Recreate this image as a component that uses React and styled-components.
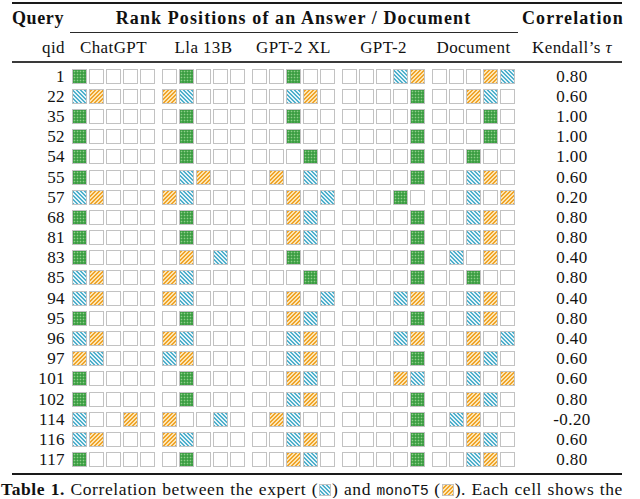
import React from 'react'
import styled, { createGlobalStyle, css } from 'styled-components'

const serif = `"Liberation Serif", "Times New Roman", "DejaVu Serif", serif`

const GlobalStyle = createGlobalStyle`
  html, body {
    margin: 0;
    padding: 0;
    background: #ffffff;
  }
  body {
    font-family: ${serif};
    color: #111111;
  }
`;

const groups = ['ChatGPT', 'Lla 13B', 'GPT-2 XL', 'GPT-2', 'Document']

// G = both agree, B = expert, O = monoT5, . = empty
const rows = [
  ['1', 'G....', '.G...', '..G..', '...BO', '...OB', '0.80'],
  ['22', 'BO...', 'OB...', '..BO.', '....G', '..OB.', '0.60'],
  ['35', 'G....', '.G...', '..G..', '....G', '...G.', '1.00'],
  ['52', 'G....', '.G...', '..G..', '....G', '...G.', '1.00'],
  ['54', 'G....', '.G...', '...G.', '....G', '..G..', '1.00'],
  ['55', 'G....', '.BO..', '.O.B.', '....G', '..BO.', '0.60'],
  ['57', 'BO...', 'OB...', '..O.B', '...G.', '..B.O', '0.20'],
  ['68', 'G....', '.G...', '..OB.', '....G', '..BO.', '0.80'],
  ['81', 'G....', '.G...', '..OB.', '....G', '..BO.', '0.80'],
  ['83', 'G....', '.O.B.', '..G..', '....G', '.B.O.', '0.40'],
  ['85', 'BO...', 'OB...', '...G.', '....G', '..G..', '0.80'],
  ['94', 'BO...', 'OB...', '..O.B', '...BO', '..BO.', '0.40'],
  ['95', 'G....', '.G...', '..OB.', '....G', '..BO.', '0.80'],
  ['96', 'BO...', 'OB...', '..BO.', '...BO', '..O.B', '0.40'],
  ['97', 'OB...', 'BO...', '..BO.', '....G', '..OB.', '0.60'],
  ['101', 'G....', '.G...', '..OB.', '...OB', '..B.O', '0.60'],
  ['102', 'G....', '.G...', '..BO.', '....G', '..OB.', '0.80'],
  ['114', 'B..O.', 'O..B.', '.OB..', '....G', '.BO..', '-0.20'],
  ['116', 'BO...', 'OB...', '..BO.', '....G', '..OB.', '0.60'],
  ['117', 'G....', '.G...', '..OB.', '....G', '..BO.', '0.80'],
]

const App = () => {
  return (
    <>
      <GlobalStyle />
      <Page>
        <Rule $weight={2} />
        <HeadRow>
          <HeadCell $align="left">Query</HeadCell>
          <HeadCell $span>Rank Positions of an Answer / Document</HeadCell>
          <HeadCell>Correlation</HeadCell>
        </HeadRow>
        <CmidRow>
          <CmidLine />
        </CmidRow>
        <SubHeadRow>
          <TextCell $align="right">qid</TextCell>
          {groups.map((g) => (
            <TextCell key={g}>{g}</TextCell>
          ))}
          <TextCell>
            Kendall’s <Tau>τ</Tau>
          </TextCell>
        </SubHeadRow>
        <Rule $weight={2} $color="#3a3a3a" />
        <Body>
          {rows.map((r) => (
            <Row key={r[0]}>
              <TextCell $align="right">{r[0]}</TextCell>
              {r.slice(1, 6).map((cells, i) => (
                <BoxGroup key={i}>
                  {cells.split('').map((c, j) => (
                    <Box key={j} $kind={c} />
                  ))}
                </BoxGroup>
              ))}
              <TextCell>{r[6]}</TextCell>
            </Row>
          ))}
        </Body>
        <Rule $weight={2} />
      </Page>
      <Caption>
        <b>Table 1.</b> Correlation between the expert (<InlineBox $kind="B" />) and{' '}
        <Mono>monoT5</Mono> (<InlineBox $kind="O" />). Each cell shows the
      </Caption>
    </>
  )
}

export default App

const cols = css`
  display: grid;
  grid-template-columns: 53px repeat(5, 83px) 100px;
  column-gap: 7px;
  align-items: center;
`;

const Page = styled.div`
  width: 610px;
  margin-left: 12px;
  padding-top: 2px;
`;

const Rule = styled.div`
  height: ${(p) => p.$weight}px;
  background: ${(p) => p.$color || '#1a1a1a'};
`;

const HeadRow = styled.div`
  ${cols};
  height: 28px;
  font-family: ${serif};
  font-weight: bold;
  font-size: 18px;
  letter-spacing: 1.1px;
`;

const HeadCell = styled.div`
  text-align: ${(p) => p.$align || 'center'};
  white-space: nowrap;
  grid-column: ${(p) => (p.$span ? '2 / span 5' : 'auto')};
  letter-spacing: ${(p) => (p.$align === 'left' ? '0.6px' : 'inherit')};
`;

const CmidRow = styled.div`
  ${cols};
  height: 1px;
`;

const CmidLine = styled.div`
  grid-column: 2 / span 5;
  height: 1px;
  margin: 0 -3px 0 -2px;
  background: #2a2a2a;
`;

const SubHeadRow = styled.div`
  ${cols};
  height: 28px;
`;

const TextCell = styled.div`
  font-family: ${serif};
  font-weight: normal;
  text-align: ${(p) => p.$align || 'center'};
  white-space: nowrap;
  font-size: 17px;
  letter-spacing: 0.4px;
  line-height: 1;
`;

const Tau = styled.i`
  font-family: ${serif};
  font-size: 17px;
`;

const Body = styled.div`
  padding: 3px 0 3px;
`;

const Row = styled.div`
  ${cols};
  height: 20.2px;
`;

const BoxGroup = styled.div`
  display: flex;
  gap: 2px;
`;

const fills = {
  G: css`
    background-color: #3c9e43;
    background-image: radial-gradient(circle, #8fd08a 0.7px, transparent 1.1px);
    background-size: 3px 3px;
  `,
  B: css`
    background-image: repeating-linear-gradient(
      45deg,
      #4fb0cc 0px,
      #4fb0cc 1.4px,
      #e4f4fa 1.4px,
      #e4f4fa 2.8px
    );
  `,
  O: css`
    background-image: repeating-linear-gradient(
      -45deg,
      #efa42a 0px,
      #efa42a 1.4px,
      #fde6b4 1.4px,
      #fde6b4 2.8px
    );
  `,
  '.': css`
    background: #ffffff;
  `,
}

const Box = styled.span`
  display: block;
  box-sizing: border-box;
  width: 15px;
  height: 15px;
  border: 1.5px solid #c2c2c2;
  ${(p) => fills[p.$kind]};
`;

const InlineBox = styled(Box)`
  display: inline-block;
  width: 12px;
  height: 12px;
  vertical-align: -1px;
  margin: 0 1px;
`;

const Caption = styled.div`
  width: 640px;
  overflow: hidden;
  white-space: nowrap;
  box-sizing: border-box;
  padding: 6px 0 0 1px;
  font-family: ${serif};
  font-size: 17.5px;
  letter-spacing: 0.6px;
  word-spacing: 0.5px;
  line-height: 1;
`;

const Mono = styled.span`
  font-family: "Liberation Mono", "DejaVu Sans Mono", monospace;
  font-size: 14.5px;
  letter-spacing: 0;
`;
